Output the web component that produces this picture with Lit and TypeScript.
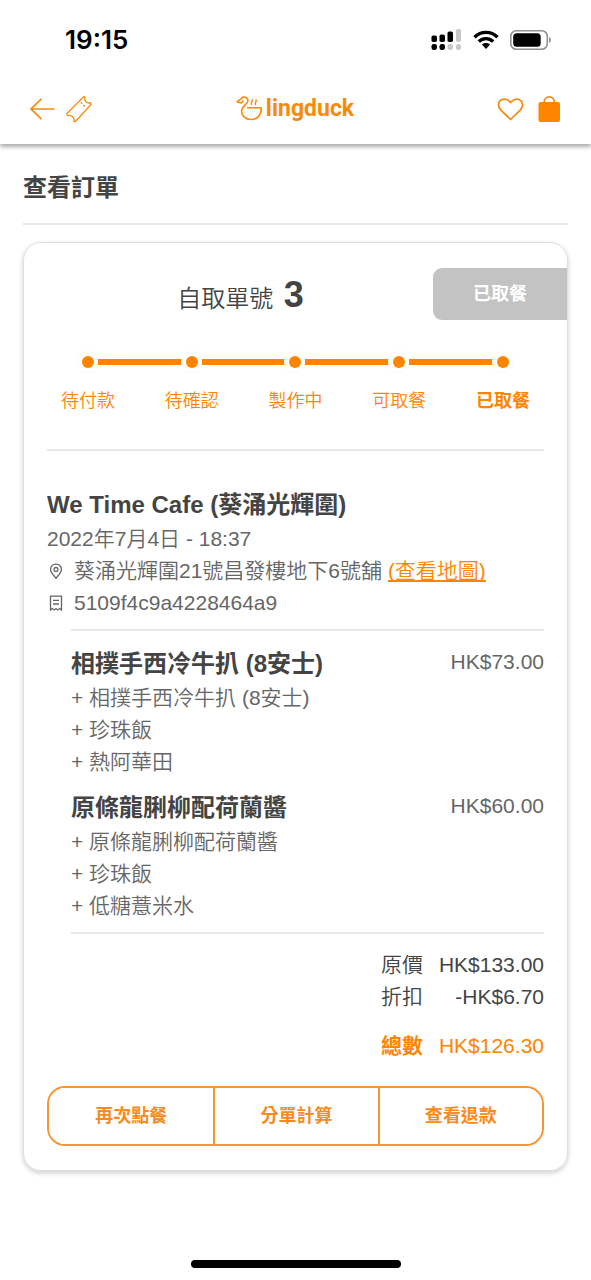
import { LitElement, html, css, svg } from "lit";
import { customElement, property } from "lit/decorators.js";

interface OrderItem {
  name: string;
  price: string;
  options: string[];
}

const steps = ["待付款", "待確認", "製作中", "可取餐", "已取餐"];

const items: OrderItem[] = [
  {
    name: "相撲手西冷牛扒 (8安士)",
    price: "HK$73.00",
    options: ["相撲手西冷牛扒 (8安士)", "珍珠飯", "熱阿華田"],
  },
  {
    name: "原條龍脷柳配荷蘭醬",
    price: "HK$60.00",
    options: ["原條龍脷柳配荷蘭醬", "珍珠飯", "低糖薏米水"],
  },
];

@customElement("status-bar")
class StatusBar extends LitElement {
  static styles = css`
    :host {
      display: flex;
      align-items: center;
      justify-content: space-between;
      height: 70px;
      padding: 9px 39px 0 65px;
      box-sizing: border-box;
      color: #000;
    }
    .time {
      font: 600 26px/32px Inter, "Liberation Sans", sans-serif;
    }
    .system {
      display: flex;
      align-items: center;
      gap: 11px;
    }
    svg {
      display: block;
    }
  `;

  render() {
    return html`
      <span class="time">19:15</span>
      <div class="system">
        <svg width="31" height="22" viewBox="0 0 31 22" aria-hidden="true">
          <rect x="0.500" y="6.500" width="5.500" height="6.500" rx="1.800" />
          <rect x="8.500" y="5.500" width="5.500" height="7.500" rx="1.800" />
          <rect x="16.500" y="2.500" width="5.500" height="10.500" rx="1.800" />
          <rect x="25" y="0" width="5" height="13" rx="1.800" fill="#c8c8c8" />
          <rect x="0.500" y="15" width="5.500" height="6" rx="2.300" />
          <rect x="8.500" y="15" width="5.500" height="6" rx="2.300" />
          <rect x="16.500" y="15" width="5.500" height="6" rx="2.300" fill="#c8c8c8" />
          <rect x="25" y="15" width="5" height="6" rx="2.300" fill="#c8c8c8" />
        </svg>
        <svg width="26" height="20" viewBox="0 0 26 20" aria-hidden="true">
          <g fill="none" stroke="#000" stroke-width="3.400">
            <path d="M1.500 7.200C8 .8 18 .8 24.500 7.200" />
            <path d="M5.800 11.600C10 7.600 16 7.600 20.200 11.600" />
          </g>
          <path d="M8.900 14.600C11.200 12.600 14.800 12.600 17.100 14.600L13 19Z" />
        </svg>
        <svg width="42" height="20" viewBox="0 0 42 20" aria-hidden="true">
          <rect x=".8" y=".8" width="36.500" height="18.400" rx="5.500" fill="none" stroke="#8f8f8f" stroke-width="1.600" />
          <rect x="3.200" y="3.200" width="27.500" height="13.600" rx="3.500" />
          <path d="M39 7C41.700 8 41.700 12 39 13Z" fill="#999" />
        </svg>
      </div>
    `;
  }
}

@customElement("app-header")
class AppHeader extends LitElement {
  static styles = css`
    :host {
      display: grid;
      grid-template-columns: 1fr auto 1fr;
      align-items: center;
      height: 74px;
      padding: 3px 30px 0 29px;
      box-sizing: border-box;
      background: #fff;
      box-shadow: 0 3px 4px rgba(0, 0, 0, 0.32);
      clip-path: inset(0 0 -12px 0);
    }
    .group {
      display: flex;
      align-items: center;
      gap: 10px;
    }
    .end {
      justify-content: flex-end;
      gap: 14px;
    }
    button {
      padding: 0;
      border: 0;
      background: none;
      cursor: pointer;
    }
    svg {
      display: block;
    }
    .brand {
      display: flex;
      align-items: center;
      gap: 3px;
      color: #f98a09;
      text-decoration: none;
      font: 700 23px/28px Roboto, "Liberation Sans", sans-serif;
    }
  `;

  render() {
    return html`
      <div class="group">
        <button aria-label="返回">
          <svg width="27" height="28" viewBox="0 0 27 28" fill="none" stroke="#f98a09" stroke-width="1.700">
            <path d="M25.500 14H2M12.500 3.800L2 14L12.500 24.200" />
          </svg>
        </button>
        <button aria-label="優惠券">
          <svg width="26" height="28" viewBox="0 0 26 28" fill="none" stroke="#f98a09" stroke-width="1.300" stroke-linejoin="round">
            <path d="M1 18.500L17.200 2.100Q18 1.300 18.700 2.200Q18.200 5 20 6.800Q21.800 8.300 24.600 7.900Q25.500 8.800 24.800 9.800L9.400 26.500Q8.500 27 7.800 26.200Q8.600 23.800 6.700 21.700Q4.600 19.800 2 20.600Q.5 20 1 18.500Z" />
            <path d="M14.700 7.400L20 12.600" stroke-dasharray="2 1.800" />
          </svg>
        </button>
      </div>
      <a class="brand" href="#">
        <svg width="27" height="26" viewBox="0 0 27 26" fill="none" stroke="#f98a09" stroke-width="1.600" stroke-linecap="round" stroke-linejoin="round" aria-hidden="true">
          <path d="M4.200 6.700L1.200 6C1.800 4.200 3.800 4.400 4.700 3.100C6.400 .3 11.300 .5 11.900 4.100C12.500 8.200 5.600 9.500 5.600 15.200C5.600 20 9.500 23.500 15 23.500C21.300 23.500 25.600 19.100 25.200 11.700H11.600" />
          <path d="M4.200 6.700C5.600 6.900 6.600 6.100 6.900 5.100" />
          <path d="M15.500 8.500C14.500 6.900 16.900 5.700 16 3.800M19.500 8.500C18.500 6.900 20.900 5.700 20 3.800" stroke-width="1.400" />
        </svg>
        <span>lingduck</span>
      </a>
      <div class="group end">
        <button aria-label="收藏">
          <svg width="27" height="26" viewBox="0 0 27 26" fill="none" stroke="#f9860a" stroke-width="1.700" stroke-linejoin="round">
            <path d="M13.500 23.500L3.600 13.800C.6 10.600 .9 6.700 3.200 4.600C6 2.200 10.800 2.700 13.500 6.600C16.200 2.700 21 2.200 23.800 4.600C26.100 6.700 26.400 10.600 23.400 13.800Z" />
          </svg>
        </button>
        <button aria-label="購物袋">
          <svg width="23" height="28" viewBox="0 0 23 28">
            <rect x=".5" y="7" width="21.500" height="20" rx="2" fill="#ff8400" />
            <path d="M6 8C6 -.3 16.500 -.3 16.500 8" fill="none" stroke="#ff8400" stroke-width="1.700" />
          </svg>
        </button>
      </div>
    `;
  }
}

@customElement("order-steps")
class OrderSteps extends LitElement {
  @property({ type: Array }) steps: string[] = [];

  static styles = css`
    ol {
      display: grid;
      grid-auto-flow: column;
      grid-auto-columns: 1fr;
      margin: 0;
      padding: 0 12px;
      list-style: none;
      color: #ff8400;
      font-size: 18px;
      line-height: 28px;
      text-align: center;
    }
    .marker {
      display: grid;
      grid-template-columns: 1fr 12px 1fr;
      align-items: center;
      gap: 4px;
      margin-bottom: 19px;
    }
    .marker::before,
    .marker::after {
      content: "";
      height: 6px;
      background: #ff8400;
    }
    .dot {
      height: 12px;
      border-radius: 50%;
      background: #ff8400;
      box-shadow: 0 0 0 4px #fff, 0 0 0 5px #fafafa;
    }
    li:first-child .marker::before,
    li:last-child .marker::after {
      visibility: hidden;
    }
    li:last-child {
      font-weight: 700;
    }
  `;

  render() {
    return html`<ol>
      ${this.steps.map(
        (s) => html`<li><div class="marker"><span class="dot"></span></div>${s}</li>`
      )}
    </ol>`;
  }
}

const pinIcon = svg`<path d="M8 1.200C4.500 1.200 2.600 3.700 2.600 6.400C2.600 9.800 5.800 12.200 8 15.400C10.200 12.200 13.400 9.800 13.400 6.400C13.400 3.700 11.500 1.200 8 1.200Z"/><circle cx="8" cy="6.400" r="1.900"/>`;
const receiptIcon = svg`<path d="M2.500 1.200H13.500V15L11.700 13.600L9.800 15L8 13.600L6.200 15L4.300 13.600L2.500 15Z"/><path d="M5 5.400H11M5 9H11"/>`;

@customElement("app-root")
class AppRoot extends LitElement {
  static styles = css`
    :host {
      display: flex;
      flex-direction: column;
      min-height: 100vh;
      background: #fff;
      color: #444;
      font-family: "Liberation Sans", "Noto Sans CJK TC", sans-serif;
      font-size: 21px;
      font-weight: 350;
      line-height: 32px;
    }
    h1,
    h2,
    h3,
    p,
    ul,
    dl,
    dd {
      margin: 0;
      padding: 0;
      list-style: none;
    }
    main {
      flex: 1;
      padding: 0 23px;
    }
    .title {
      padding: 25px 0 16px;
      border-bottom: 2px solid #e8e8e8;
      font-size: 24px;
      line-height: 38px;
      font-weight: 700;
    }
    .card {
      margin-top: 17px;
      padding-bottom: 24px;
      border: 1px solid #dcdfdf;
      border-radius: 18px;
      box-shadow: 0 2px 5px rgba(0, 0, 0, 0.2);
    }
    .pickup {
      display: flex;
      align-items: center;
      padding: 23px 0 34px 24px;
    }
    .number {
      flex: 1;
      padding-top: 6px;
      color: #444;
      font-size: 24px;
      line-height: 46px;
      font-weight: inherit;
      text-align: center;
    }
    .number strong {
      margin-left: 4px;
      font-size: 36px;
      font-weight: 700;
    }
    .badge {
      width: 134px;
      border-radius: 9px 0 0 9px;
      background: #c3c3c3;
      color: #fff;
      font-size: 18px;
      line-height: 52px;
      font-weight: 700;
      text-align: center;
    }
    .body {
      padding: 0 23px;
    }
    .shop {
      margin-top: 34px;
      padding: 35px 0 10px;
      border-top: 2px solid #e8e8e8;
      color: #666;
    }
    h2,
    h3 {
      color: #444;
      font-size: 24px;
      line-height: 37px;
      font-weight: 700;
    }
    .line {
      display: grid;
      grid-template-columns: 18px 1fr;
      align-items: center;
      gap: 9px;
    }
    .line svg {
      display: block;
      justify-self: center;
      fill: none;
      stroke: #666;
      stroke-width: 1.3;
    }
    .line a {
      color: #ff8400;
      text-decoration-thickness: 2px;
      text-decoration-skip-ink: none;
      text-underline-offset: 2px;
    }
    .items {
      display: grid;
      gap: 11px;
      margin-left: 24px;
      padding: 14px 0 10px;
      border: solid #e8e8e8;
      border-width: 2px 0;
      color: #666;
    }
    .item {
      display: grid;
      grid-template-columns: 1fr auto;
    }
    .price {
      line-height: 34px;
    }
    .options {
      grid-column: 1 / -1;
    }
    .totals {
      display: grid;
      grid-template-columns: 1fr auto;
      column-gap: 16px;
      padding: 15px 0 24px;
      text-align: right;
    }
    .grand {
      margin-top: 17px;
      color: #ff8400;
    }
    dt.grand {
      font-weight: 700;
    }
    .actions {
      display: grid;
      grid-template-columns: repeat(3, 1fr);
      border: 2px solid #f9952f;
      border-radius: 18px;
      overflow: hidden;
    }
    .actions button {
      height: 56px;
      padding: 0;
      border: 0;
      background: #fff;
      color: #f98a1c;
      font: inherit;
      font-size: 18px;
      font-weight: 700;
      cursor: pointer;
    }
    .actions button + button {
      border-left: 2px solid #f9952f;
    }
    .home {
      width: 210px;
      height: 8px;
      margin: 0 auto 12px;
      border-radius: 4px;
      background: #000;
    }
  `;

  render() {
    return html`
      <status-bar></status-bar>
      <app-header></app-header>
      <main>
        <h1 class="title">查看訂單</h1>
        <article class="card">
          <div class="pickup">
            <p class="number">自取單號 <strong>3</strong></p>
            <span class="badge">已取餐</span>
          </div>
          <order-steps .steps=${steps}></order-steps>
          <div class="body">
            <section class="shop">
              <h2>We Time Cafe (葵涌光輝圍)</h2>
              <p><time datetime="2022-07-04T18:37">2022年7月4日 - 18:37</time></p>
              <p class="line">
                <svg width="16" height="16" viewBox="0 0 16 16" aria-hidden="true">${pinIcon}</svg>
                <span>葵涌光輝圍21號昌發樓地下6號舖 <a href="#">(查看地圖)</a></span>
              </p>
              <p class="line">
                <svg width="16" height="16" viewBox="0 0 16 16" aria-hidden="true">${receiptIcon}</svg>
                <span>5109f4c9a4228464a9</span>
              </p>
            </section>
            <ul class="items">
              ${items.map(
                (item) => html`<li class="item">
                  <h3>${item.name}</h3>
                  <span class="price">${item.price}</span>
                  <ul class="options">
                    ${item.options.map((o) => html`<li>+ ${o}</li>`)}
                  </ul>
                </li>`
              )}
            </ul>
            <dl class="totals">
              <dt>原價</dt>
              <dd>HK$133.00</dd>
              <dt>折扣</dt>
              <dd>-HK$6.70</dd>
              <dt class="grand">總數</dt>
              <dd class="grand">HK$126.30</dd>
            </dl>
            <div class="actions">
              <button>再次點餐</button>
              <button>分單計算</button>
              <button>查看退款</button>
            </div>
          </div>
        </article>
      </main>
      <div class="home"></div>
    `;
  }
}
